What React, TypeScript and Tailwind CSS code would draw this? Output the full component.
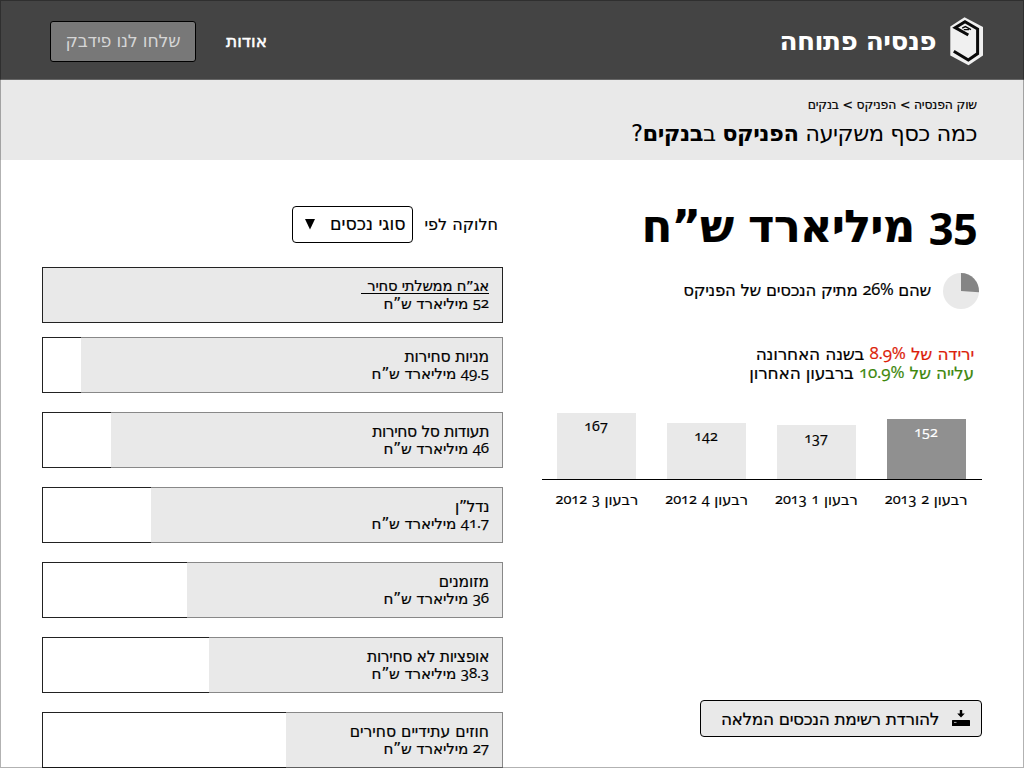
import type { ReactNode } from "react";

function Num({ children }: { children: ReactNode }) {
  return (
    <span className="relative -top-[0.05em] font-['Open_Sans',sans-serif] leading-none oldstyle-nums">{children}</span>
  );
}

const assets = [
  { name: "אג”ח ממשלתי סחיר", amount: "52", gap: "mb-[14px]", fill: "w-[461px]", tracking: "", selected: true },
  { name: "מניות סחירות", amount: "49.5", gap: "mb-[19px]", fill: "w-[422px]", tracking: "tracking-[-0.2px]" },
  { name: "תעודות סל סחירות", amount: "46", gap: "mb-[19px]", fill: "w-[392px]", tracking: "tracking-[-0.4px]" },
  { name: "נדל”ן", amount: "41.7", gap: "mb-[19px]", fill: "w-[352px]", tracking: "tracking-[-0.4px]" },
  { name: "מזומנים", amount: "36", gap: "mb-[19px]", fill: "w-[316px]", tracking: "tracking-[-0.1px]" },
  { name: "אופציות לא סחירות", amount: "38.3", gap: "mb-[19px]", fill: "w-[294px]", tracking: "tracking-[-0.35px]" },
  { name: "חוזים עתידיים סחירים", amount: "27", gap: "", fill: "w-[217px]", tracking: "" },
];

const quarters = [
  { value: "152", quarter: "2", year: "2013", bar: "h-[60px] bg-[#909090] text-white" },
  { value: "137", quarter: "1", year: "2013", bar: "h-[54px] bg-[#e9e9e9]" },
  { value: "142", quarter: "4", year: "2012", bar: "h-[56px] bg-[#e9e9e9]" },
  { value: "167", quarter: "3", year: "2012", bar: "h-[66px] bg-[#e9e9e9]" },
];

function Logo() {
  return (
    <svg width="34" height="49" viewBox="0 0 34 49" fill="none">
      <path d="M14.5 0.2 L33 10 V38.5 L18.5 48.3 L0.3 38.5 V9.5 Z" fill="#f0f0f0" />
      <path
        d="M18.3 18 L5.2 10.6 L15 4.8 L27.6 12 V36.6 L18.3 43 L3.8 34.2"
        stroke="#0a0a0a"
        strokeWidth="3"
      />
      <path d="M12.2 11.2 L15.4 9.6 L21 12.6 M13.8 12.6 H19" stroke="#0a0a0a" strokeWidth="1.3" />
    </svg>
  );
}

function Header() {
  return (
    <header className="flex h-20 shrink-0 items-center border-b border-[#666] bg-[#444] pr-[40px] pl-[50px] text-white">
      <div className="mt-[3px]">
        <Logo />
      </div>
      <h1 className="mt-[3px] mr-[14px] text-[26.4px] leading-8 font-bold tracking-[-0.6px]">פנסיה פתוחה</h1>
      <nav className="mt-[3px] mr-auto flex items-center gap-[30px]">
        <a className="mt-px text-[17px] [-webkit-text-stroke:0.5px_white]">אודות</a>
        <button className="h-[41px] w-[146px] rounded-[3px] border border-black bg-[#787878] text-[17.4px] tracking-[-0.2px] text-[#d5d5d5]">
          שלחו לנו פידבק
        </button>
      </nav>
    </header>
  );
}

function Summary() {
  return (
    <section className="flex w-[440px] flex-col [-webkit-text-stroke:0.2px]">
      <h3 className="mt-[39px] h-[56px] pr-[5px] text-[45px] leading-[56px] font-bold tracking-[-0.9px]">
        <Num>
          <span className="relative -top-[2px] text-[43px]">35</span>
        </Num>{" "}
        מיליארד ש”ח
      </h3>
      <div className="mt-[18px] flex items-center pr-[3px]">
        <svg width="36" height="36" viewBox="0 0 36 36">
          <circle cx="18" cy="18" r="18" fill="#e9e9e9" />
          <path d="M18 18 V0 A18 18 0 0 1 35.96 19.13 Z" fill="#858585" />
        </svg>
        <p className="-mt-px mr-[12px] text-[16.6px] leading-5 tracking-[-0.3px]">
          שהם <Num>26%</Num> מתיק הנכסים של הפניקס
        </p>
      </div>
      <div className="mt-[36px] pr-[8px] text-[17px] leading-[19px] tracking-[-0.2px]">
        <p>
          <span className="text-[#dc1e0a]">
            ירידה של <Num>8.9%</Num>
          </span>{" "}
          בשנה האחרונה
        </p>
        <p>
          <span className="text-[#3d870c]">
            עלייה של <Num>10.9%</Num>
          </span>{" "}
          ברבעון האחרון
        </p>
      </div>
      <div className="mt-[30px] flex h-[67px] items-end gap-[31px] border-b border-black pr-[16.5px]">
        {quarters.map((q) => (
          <div key={q.value} className={`flex w-[79px] justify-center pt-[7px] text-[14.4px] leading-5 font-medium ${q.bar}`}>
            <Num>{q.value}</Num>
          </div>
        ))}
      </div>
      <div className="mt-[10px] flex pr-[1px] text-[14.6px] leading-5">
        {quarters.map((q) => (
          <div key={q.value} className="w-[110px] text-center">
            רבעון <Num>{q.quarter}</Num> <Num>{q.year}</Num>
          </div>
        ))}
      </div>
      <button className="mt-auto mb-[31px] flex h-[37px] w-[282px] items-center rounded-[4px] border border-black bg-[#e9e9e9] pr-[11px]">
        <svg width="18" height="17" viewBox="0 0 18 17">
          <path d="M7.8 0 H10.2 V3.5 H12.8 L9 7.4 L5.2 3.5 H7.8 Z" />
          <rect y="10" width="18" height="6" rx="0.5" />
          <path d="M2 12.4 H4.5" stroke="#aaa" />
        </svg>
        <span className="mt-[2px] mr-[13px] text-[17px] tracking-[-0.38px]">להורדת רשימת הנכסים המלאה</span>
      </button>
    </section>
  );
}

function Breakdown() {
  return (
    <section className="mr-[39px] w-[461px] [-webkit-text-stroke:0.2px]">
      <div className="mt-[46px] flex h-[37px] items-center pr-[5px] text-[16px]">
        <span>חלוקה לפי</span>
        <button className="mr-[12px] flex h-[37px] w-[121px] items-center justify-between rounded-[4px] border border-black pr-[6px] pl-[12px] text-[17.4px]">
          סוגי נכסים
          <svg width="10" height="11" viewBox="0 0 10 11">
            <path d="M0 0 H10 L5 10.5 Z" />
          </svg>
        </button>
      </div>
      <ul className="mt-[24px]">
        {assets.map((a) => (
          <li key={a.name} className={`flex h-[56px] ${a.gap}`}>
            <div
              className={`shrink-0 border-y border-r bg-[#e9e9e9] pt-[10px] pr-[13px] leading-[18px] ${a.fill} ${
                a.selected ? "border-l border-[#222]" : "border-[#888]"
              }`}
            >
              {a.selected ? (
                <p className="mb-[2px] w-fit border-b border-black pl-[6px] text-[14.8px] leading-[15px] tracking-[-0.25px]">
                  {a.name}
                </p>
              ) : (
                <p className={`text-[15.6px] ${a.tracking}`}>{a.name}</p>
              )}
              <p className="-mt-px text-[15.2px] tracking-[-0.15px]">
                <Num>{a.amount}</Num> מיליארד ש”ח
              </p>
            </div>
            {!a.selected && <div className="flex-1 border-y border-l border-[#222] bg-white" />}
          </li>
        ))}
      </ul>
    </section>
  );
}

export default function App() {
  return (
    <div
      dir="rtl"
      className="relative flex h-[768px] w-[1024px] flex-col overflow-hidden bg-white font-['DejaVu_Sans',sans-serif] whitespace-nowrap text-black"
    >
      <Header />
      <section className="h-20 shrink-0 bg-[#e9e9e9] pt-[16px] pr-[47px]">
        <p className="text-[12.4px] leading-[18px] tracking-[-0.15px] [-webkit-text-stroke:0.2px]">
          שוק הפנסיה &gt; הפניקס &gt; בנקים
        </p>
        <h2 className="mt-[4px] text-[22.6px] leading-[30px] tracking-[-0.5px]">
          כמה כסף משקיעה <b>הפניקס</b> ב<b>בנקים</b>?
        </h2>
      </section>
      <main className="flex h-[608px] overflow-hidden pr-[42px]">
        <Summary />
        <Breakdown />
      </main>
      <div className="pointer-events-none absolute inset-0 border border-black/30" />
    </div>
  );
}
